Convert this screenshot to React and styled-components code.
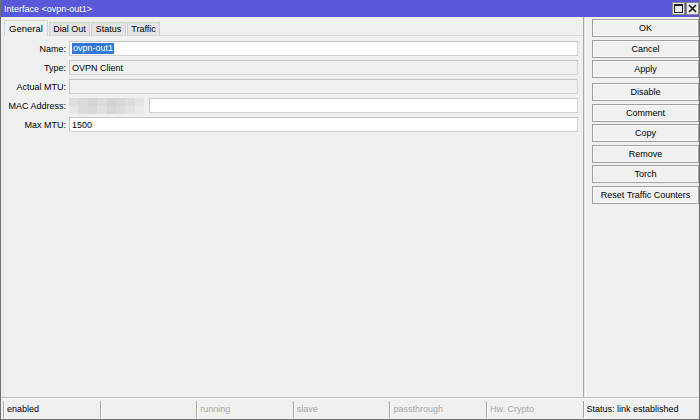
import React from 'react';
import styled, { createGlobalStyle } from 'styled-components';

const Global = createGlobalStyle`
  html, body { margin: 0; padding: 0; background: #f0f0f0; }
  * { box-sizing: border-box; }
`;

const Window = styled.div`
  width: 700px;
  height: 420px;
  display: flex;
  flex-direction: column;
  background: #f0f0f0;
  border: 1px solid #6e6e6e;
  border-top: none;
  font-family: "Liberation Sans", Arial, sans-serif;
  font-size: 9px;
  color: #000;
  overflow: hidden;
`;

const TitleBar = styled.div`
  height: 17px;
  flex: none;
  display: flex;
  align-items: center;
  padding: 0 1px 0 4px;
  margin: 0 -1px;
  background: #5858d8;
  color: #fff;
  font-size: 9px;
`;

const TitleText = styled.div`
  flex: 1;
`;

const TitleButton = styled.div`
  width: 13px;
  height: 13px;
  margin-left: 1px;
  background: #ececec;
  border: 1px solid #8a8a8a;
  display: flex;
  align-items: center;
  justify-content: center;
`;

const Body = styled.div`
  flex: 1;
  display: flex;
  min-height: 0;
`;

const Main = styled.div`
  width: 582px;
  display: flex;
  flex-direction: column;
  padding: 2px 0 0 2px;
`;

const TabStrip = styled.div`
  height: 16px;
  display: flex;
  align-items: flex-end;
  padding-left: 1px;
`;

const Tab = styled.div`
  height: ${p => (p.$active ? 16 : 13)}px;
  padding: 0 ${p => (p.$active ? 4 : 3.5)}px;
  display: flex;
  align-items: center;
  margin-right: 1px;
  background: ${p => (p.$active ? '#f0f0f0' : '#e3e3e3')};
  border: 1px solid ${p => (p.$active ? '#d4d4d4' : '#cfcfcf')};
  border-bottom: none;
  font-size: ${p => (p.$active ? 9.5 : 9)}px;
  position: relative;
  top: ${p => (p.$active ? 1 : 0)}px;
`;

const Panel = styled.div`
  flex: 1;
  border-top: 1px solid #dadada;
  border-left: 1px solid #e2e2e2;
  padding: 5px 5px 0 0;
`;

const Row = styled.div`
  display: grid;
  grid-template-columns: 62px 1fr;
  column-gap: 3px;
  align-items: center;
  height: 15px;
  margin-bottom: 4px;
`;

const Label = styled.div`
  text-align: right;
  white-space: nowrap;
`;

const Field = styled.div`
  height: 15px;
  display: flex;
  align-items: center;
  padding-left: 2px;
  background: ${p => (p.$readOnly ? '#f0f0f0' : '#fff')};
  border: 1px solid #c6c6c6;
  border-right-color: #d2d2d2;
  border-bottom-color: #d2d2d2;
`;

const Selected = styled.span`
  background: #3278d6;
  color: #fff;
  padding: 0 1px;
  line-height: 11px;
`;

const MacRow = styled.div`
  display: flex;
  align-items: center;
  height: 15px;
`;

const Mosaic = styled.div`
  width: 75px;
  height: 16px;
  display: grid;
  grid-template-columns: repeat(8, 1fr);
  grid-template-rows: repeat(2, 1fr);
  margin-right: 5px;
  filter: blur(0.5px);
`;

const Block = styled.div`
  background: ${p => p.$c};
`;

const Divider = styled.div`
  width: 3px;
  flex: none;
  border-left: 1px solid #a8a8a8;
  border-right: 1px solid #fcfcfc;
  background: #e6e6e6;
`;

const Side = styled.div`
  flex: 1;
  display: flex;
  flex-direction: column;
  padding: 2px 0 0 6px;
`;

const Button = styled.div`
  height: 18px;
  margin-bottom: ${p => (p.$gapAfter ? 5 : 2.5)}px;
  display: flex;
  align-items: center;
  justify-content: center;
  background: #f0f0f0;
  border: 1px solid #9f9f9f;
  box-shadow: inset 0 0 0 1px #fafafa;
  font-size: 9px;
  white-space: nowrap;
`;

const StatusBar = styled.div`
  height: 22px;
  flex: none;
  display: flex;
  align-items: center;
  padding: 2px 1px 1px 2px;
  border-top: 1px solid #bdbdbd;
  box-shadow: inset 0 1px 0 #fafafa;
`;

const Cell = styled.div`
  width: ${p => (p.$grow ? 'auto' : '96.6px')};
  flex: ${p => (p.$grow ? 1 : 'none')};
  height: 17px;
  display: flex;
  align-items: center;
  padding-left: 3px;
  border-left: 1px solid #a6a6a6;
  box-shadow: inset 1px 0 0 #fdfdfd;
  color: ${p => (p.$dim ? '#a7a7a7' : '#000')};
  white-space: nowrap;
`;

const mosaic = [
  '#dedede', '#d9d9d9', '#d4d4d4', '#dadada', '#d3d3d3', '#d7d7d7', '#dddddd', '#e4e4e4',
  '#e6e6e6', '#dcdcdc', '#d8d8d8', '#e0e0e0', '#d6d6d6', '#dbdbdb', '#e2e2e2', '#e9e9e9',
];

const buttons = [
  { t: 'OK' },
  { t: 'Cancel' },
  { t: 'Apply', gap: true },
  { t: 'Disable' },
  { t: 'Comment' },
  { t: 'Copy' },
  { t: 'Remove' },
  { t: 'Torch' },
  { t: 'Reset Traffic Counters' },
];

const status = [
  { t: 'enabled' },
  { t: '' },
  { t: 'running', dim: true },
  { t: 'slave', dim: true },
  { t: 'passthrough', dim: true },
  { t: 'Hw. Crypto', dim: true },
];

export default function App() {
  return (
    <>
      <Global />
      <Window>
        <TitleBar>
          <TitleText>Interface &lt;ovpn-out1&gt;</TitleText>
          <TitleButton>
            <svg width="9" height="9" viewBox="0 0 9 9">
              <rect x="0.5" y="0.5" width="8" height="8" fill="none" stroke="#222" strokeWidth="1" />
              <line x1="0" y1="1.5" x2="9" y2="1.5" stroke="#222" strokeWidth="1" />
            </svg>
          </TitleButton>
          <TitleButton>
            <svg width="9" height="9" viewBox="0 0 9 9">
              <path d="M1 1 L8 8 M8 1 L1 8" stroke="#111" strokeWidth="1.6" />
            </svg>
          </TitleButton>
        </TitleBar>
        <Body>
          <Main>
            <TabStrip>
              <Tab $active>General</Tab>
              <Tab>Dial Out</Tab>
              <Tab>Status</Tab>
              <Tab>Traffic</Tab>
            </TabStrip>
            <Panel>
              <Row>
                <Label>Name:</Label>
                <Field><Selected>ovpn-out1</Selected></Field>
              </Row>
              <Row>
                <Label>Type:</Label>
                <Field $readOnly>OVPN Client</Field>
              </Row>
              <Row>
                <Label>Actual MTU:</Label>
                <Field $readOnly />
              </Row>
              <Row>
                <Label>MAC Address:</Label>
                <MacRow>
                  <Mosaic>
                    {mosaic.map((c, i) => <Block key={i} $c={c} />)}
                  </Mosaic>
                  <Field style={{ flex: 1 }} />
                </MacRow>
              </Row>
              <Row>
                <Label>Max MTU:</Label>
                <Field>1500</Field>
              </Row>
            </Panel>
          </Main>
          <Divider />
          <Side>
            {buttons.map(b => (
              <Button key={b.t} $gapAfter={b.gap}>{b.t}</Button>
            ))}
          </Side>
        </Body>
        <StatusBar>
          {status.map((s, i) => (
            <Cell key={i} $dim={s.dim}>{s.t}</Cell>
          ))}
          <Cell $grow>Status: link established</Cell>
        </StatusBar>
      </Window>
    </>
  );
}
